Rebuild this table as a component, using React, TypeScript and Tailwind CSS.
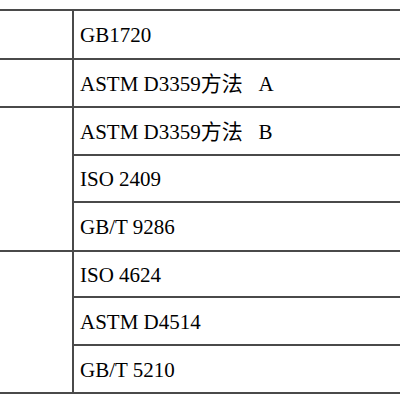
const rows = [
  "GB1720",
  "ASTM D3359方法   A",
  "ASTM D3359方法   B",
  "ISO 2409",
  "GB/T 9286",
  "ISO 4624",
  "ASTM D4514",
  "GB/T 5210",
];

// left column cells: [start row, span]
const groups = [
  "row-start-1 row-span-1",
  "row-start-2 row-span-1",
  "row-start-3 row-span-3",
  "row-start-6 row-span-3",
];

const rowStarts = [
  "row-start-1",
  "row-start-2",
  "row-start-3",
  "row-start-4",
  "row-start-5",
  "row-start-6",
  "row-start-7",
  "row-start-8",
];

export default function App() {
  return (
    <div className="w-[400px] h-[400px] overflow-hidden bg-white">
      <div
        className="-ml-[50px] mt-[9px] w-[700px] grid grid-cols-[122px_1fr] grid-rows-[49px_48px_48px_47px_49px_46px_48px_48px] border-t-2 border-[#4a4a4a] text-[21px] text-black"
        style={{ fontFamily: '"Liberation Serif", "Noto Sans CJK SC", serif' }}
      >
        {groups.map((g) => (
          <div key={g} className={`col-start-1 ${g} border-b-2 border-[#4a4a4a]`} />
        ))}
        {rows.map((label, i) => (
          <div
            key={label}
            className={`col-start-2 ${rowStarts[i]} flex items-center pl-[6px] pt-[3px] border-l-2 border-b-2 border-[#4a4a4a] whitespace-pre`}
          >
            {label}
          </div>
        ))}
      </div>
    </div>
  );
}
